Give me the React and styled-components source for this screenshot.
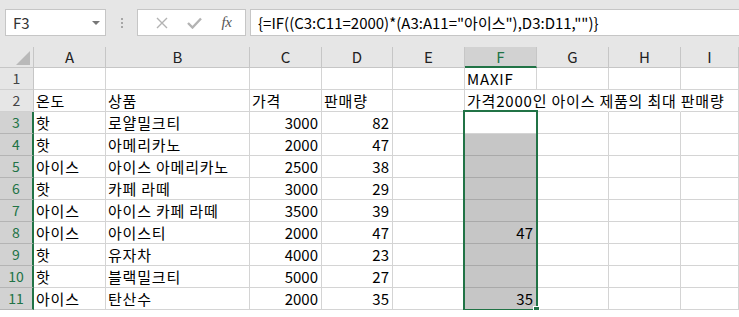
import React from "react";
import styled, { createGlobalStyle, css } from "styled-components";

const GlobalStyle = createGlobalStyle`
  body {
    margin: 0;
    background: #fff;
    font-family: "Noto Sans CJK KR", "Noto Sans", sans-serif;
  }
`;

const GREEN = "#217346";
const COLS = ["A", "B", "C", "D", "E", "F", "G", "H", "I"];

// [온도, 상품, 가격, 판매량, E, F]
const ROWS = [
  ["", "", "", "", "", "MAXIF"],
  ["온도", "상품", "가격", "판매량", "", "가격2000인 아이스 제품의 최대 판매량"],
  ["핫", "로얄밀크티", 3000, 82, "", ""],
  ["핫", "아메리카노", 2000, 47, "", ""],
  ["아이스", "아이스 아메리카노", 2500, 38, "", ""],
  ["핫", "카페 라떼", 3000, 29, "", ""],
  ["아이스", "아이스 카페 라떼", 3500, 39, "", ""],
  ["아이스", "아이스티", 2000, 47, "", 47],
  ["핫", "유자차", 4000, 23, "", ""],
  ["핫", "블랙밀크티", 5000, 27, "", ""],
  ["아이스", "탄산수", 2000, 35, "", 35],
];

const Toolbar = styled.div`
  display: flex;
  align-items: flex-start;
  height: 47px;
  padding: 9px 0 0 5px;
  box-sizing: border-box;
  background: #e6e6e6;
`;

const Box = styled.div`
  height: 27px;
  box-sizing: border-box;
  background: #fff;
  border: 1px solid #c6c6c6;
  display: flex;
  align-items: center;
`;

const NameBox = styled(Box)`
  width: 101px;
  padding: 0 5px 0 7px;
  justify-content: space-between;
  font-size: 15px;
  color: #333;
`;

const Caret = styled.span`
  width: 0;
  height: 0;
  border-left: 4px solid transparent;
  border-right: 4px solid transparent;
  border-top: 4px solid #777;
`;

const Grip = styled.div`
  width: 31px;
  height: 27px;
  display: flex;
  flex-direction: column;
  align-items: center;
  justify-content: center;
  gap: 2px;

  span {
    width: 2px;
    height: 2px;
    background: #a6a6a6;
  }
`;

const FxBox = styled(Box)`
  width: 109px;
  justify-content: space-around;
  padding: 0 4px 0 8px;
`;

const Fx = styled.span`
  font-family: "Liberation Serif", serif;
  font-style: italic;
  font-size: 15px;
  color: #555;
  letter-spacing: -0.5px;
`;

const FormulaBox = styled(Box)`
  flex: 1;
  margin-left: 4px;
  border-right: none;
  padding-left: 7px;
  font-size: 15px;
  color: #000;
  white-space: nowrap;
`;

const Sheet = styled.div`
  position: relative;
  display: grid;
  grid-template-columns: 34px 72px 144px 72px 71px 72px 72px 72px 72px 1fr;
  grid-template-rows: 21px repeat(11, 22px);
`;

const ColHead = styled.div`
  box-sizing: border-box;
  background: ${(p) => (p.$active ? "#d2d2d2" : "#e6e6e6")};
  border-right: 1px solid #c6c6c6;
  border-bottom: ${(p) => (p.$active ? `2px solid ${GREEN}` : "1px solid #c6c6c6")};
  color: ${(p) => (p.$active ? GREEN : "#222")};
  font-size: 15px;
  line-height: 20px;
  text-align: center;
`;

const Corner = styled(ColHead)`
  display: flex;
  align-items: flex-end;
  justify-content: flex-end;
  padding: 0 3px 2px 0;
`;

const RowHead = styled.div`
  box-sizing: border-box;
  background: ${(p) => (p.$active ? "#d2d2d2" : "#e6e6e6")};
  border-bottom: 1px solid ${(p) => (p.$active ? "#b4b4b4" : "#d0d0d0")};
  border-right: ${(p) => (p.$active ? `2px solid ${GREEN}` : "1px solid #c6c6c6")};
  color: ${(p) => (p.$active ? GREEN : "#444")};
  font-size: 14px;
  line-height: 21px;
  text-align: center;
`;

const Cell = styled.div`
  box-sizing: border-box;
  border-bottom: 1px solid #d4d4d4;
  border-right: 1px solid ${(p) => (p.$spill ? "transparent" : "#d4d4d4")};
  font-size: 15px;
  line-height: 21px;
  color: #000;
  white-space: nowrap;
  overflow: visible;
  padding: 0 3px 0 2px;
  text-align: ${(p) => (p.$num ? "right" : "left")};
  letter-spacing: ${(p) => (p.$num ? "0" : "0.8px")};
  ${(p) =>
    p.$selected &&
    css`
      background: #c6c6c6;
      border-bottom-color: #a9a9a9;
    `}
`;

const Selection = styled.div`
  position: absolute;
  left: 463px;
  top: 63px;
  width: 75px;
  height: 201px;
  box-sizing: border-box;
  border: 2px solid ${GREEN};
  pointer-events: none;
`;

const Handle = styled.div`
  position: absolute;
  right: -4px;
  bottom: -4px;
  width: 5px;
  height: 5px;
  background: ${GREEN};
  border: 1px solid #fff;
`;

const CancelIcon = () => (
  <svg width="12" height="12" viewBox="0 0 12 12">
    <path d="M1 1 L11 11 M11 1 L1 11" stroke="#b3b3b3" strokeWidth="1.4" fill="none" />
  </svg>
);

const EnterIcon = () => (
  <svg width="15" height="12" viewBox="0 0 15 12">
    <path d="M1 6 L5.5 10.5 L14 1.5" stroke="#b3b3b3" strokeWidth="2.4" fill="none" />
  </svg>
);

export default function App() {
  return (
    <>
      <GlobalStyle />
      <Toolbar>
        <NameBox>
          F3
          <Caret />
        </NameBox>
        <Grip>
          <span />
          <span />
          <span />
        </Grip>
        <FxBox>
          <CancelIcon />
          <EnterIcon />
          <Fx>fx</Fx>
        </FxBox>
        <FormulaBox>{'{=IF((C3:C11=2000)*(A3:A11="아이스"),D3:D11,"")}'}</FormulaBox>
      </Toolbar>
      <Sheet>
        <Corner>
          <svg width="14" height="14" viewBox="0 0 14 14">
            <polygon points="14,0 14,14 0,14" fill="#b9b9b9" />
          </svg>
        </Corner>
        {COLS.map((c) => (
          <ColHead key={c} $active={c === "F"}>
            {c}
          </ColHead>
        ))}
        {ROWS.map((row, r) => {
          const n = r + 1;
          const inSel = n >= 3;
          return (
            <React.Fragment key={n}>
              <RowHead $active={inSel}>{n}</RowHead>
              {COLS.map((c, ci) => {
                const v = ci < row.length ? row[ci] : "";
                const spill = n === 2 && ci >= 5 && ci <= 7;
                return (
                  <Cell
                    key={c}
                    $num={typeof v === "number"}
                    $spill={spill}
                    $selected={c === "F" && n >= 4}
                  >
                    {v}
                  </Cell>
                );
              })}
            </React.Fragment>
          );
        })}
        <Selection>
          <Handle />
        </Selection>
      </Sheet>
    </>
  );
}
